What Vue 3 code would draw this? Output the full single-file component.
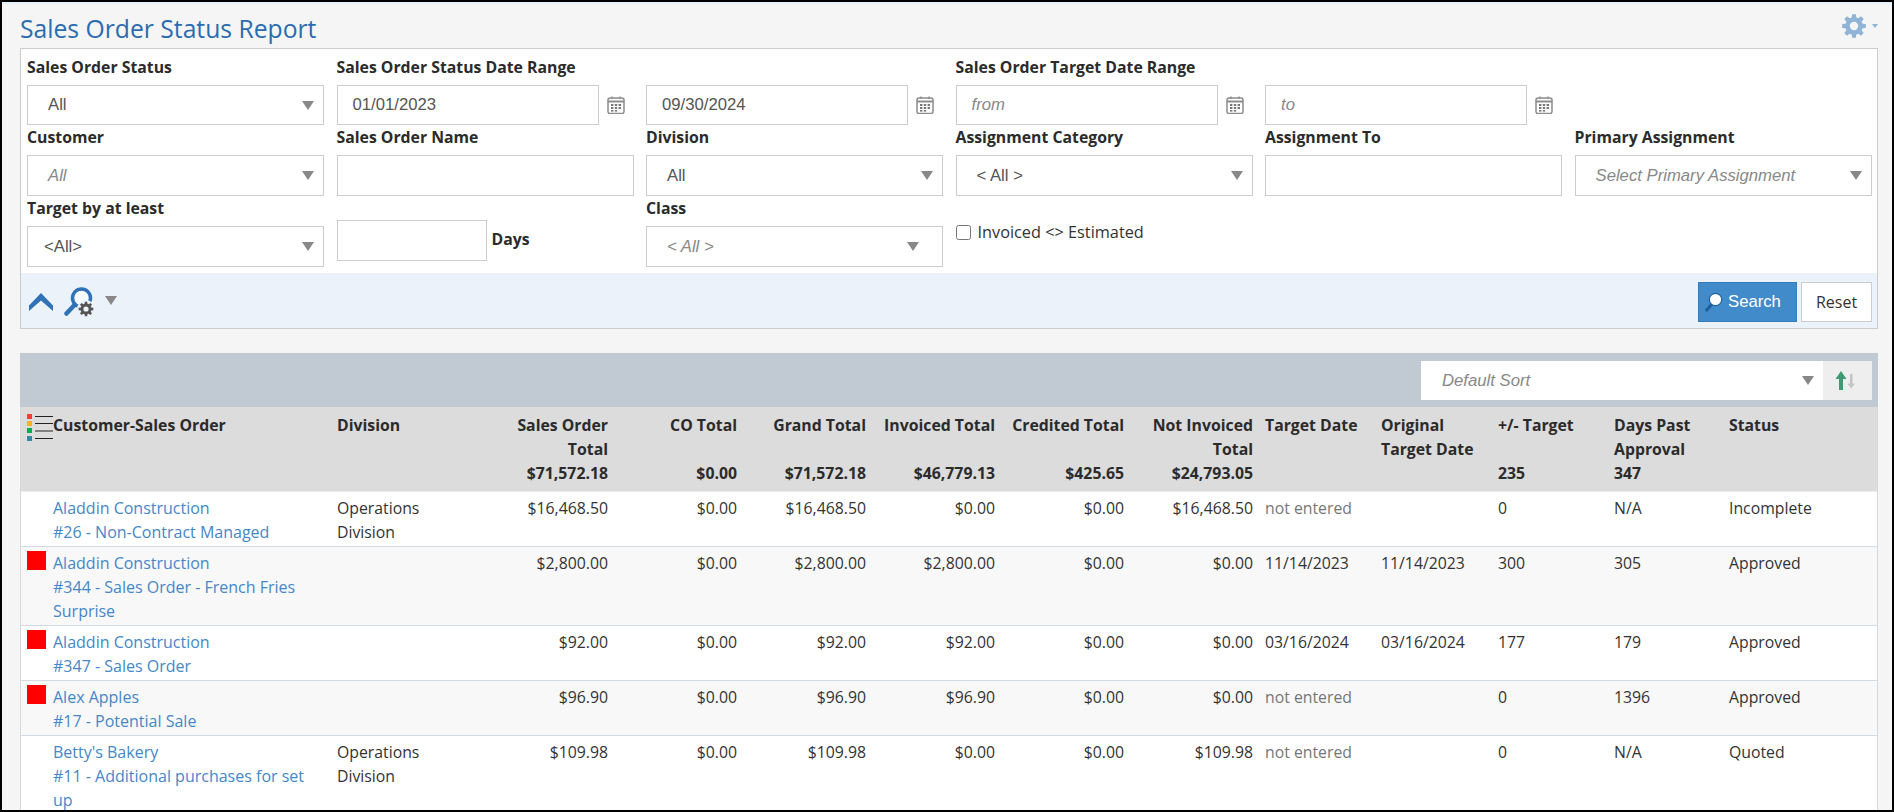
<template>
  <div class="page">
    <div class="title-bar">
      <h1 class="title">Sales Order Status Report</h1>
      <div class="settings">
        <svg width="24" height="24" viewBox="-12 -12 24 24">
          <path :d="gear" fill="#8fb4d6" fill-rule="evenodd" />
        </svg>
        <span class="settings-caret"></span>
      </div>
    </div>

    <section class="filters">
      <div class="filter-grid">
        <div class="field">
          <label class="field-label">Sales Order Status</label>
          <div class="select-box first-row"><span>All</span><i class="arrow"></i></div>
        </div>
        <div class="field span-2">
          <label class="field-label">Sales Order Status Date Range</label>
          <div class="date-range">
            <div v-for="d in statusDates" :key="d" class="date-group">
              <input class="text-input first-row date-input" :value="d" />
              <svg class="cal" width="18" height="18" viewBox="0 0 18 18">
                <use href="#cal-icon" />
              </svg>
            </div>
          </div>
        </div>
        <div class="field span-2">
          <label class="field-label">Sales Order Target Date Range</label>
          <div class="date-range">
            <div v-for="d in targetDates" :key="d" class="date-group">
              <input class="text-input first-row date-input" :placeholder="d" />
              <svg class="cal" width="18" height="18" viewBox="0 0 18 18">
                <use href="#cal-icon" />
              </svg>
            </div>
          </div>
        </div>
        <div class="field"></div>

        <div class="field">
          <label class="field-label">Customer</label>
          <div class="select-box placeholder"><span>All</span><i class="arrow"></i></div>
        </div>
        <div class="field">
          <label class="field-label">Sales Order Name</label>
          <input class="text-input" />
        </div>
        <div class="field">
          <label class="field-label">Division</label>
          <div class="select-box"><span>All</span><i class="arrow"></i></div>
        </div>
        <div class="field">
          <label class="field-label">Assignment Category</label>
          <div class="select-box"><span>&lt; All &gt;</span><i class="arrow"></i></div>
        </div>
        <div class="field">
          <label class="field-label">Assignment To</label>
          <input class="text-input" />
        </div>
        <div class="field">
          <label class="field-label">Primary Assignment</label>
          <div class="select-box placeholder"><span>Select Primary Assignment</span><i class="arrow"></i></div>
        </div>

        <div class="field">
          <label class="field-label">Target by at least</label>
          <div class="select-box tight"><span>&lt;All&gt;</span><i class="arrow"></i></div>
        </div>
        <div class="field days-field">
          <input class="text-input days-input" />
          <span class="days-label">Days</span>
        </div>
        <div class="field">
          <label class="field-label">Class</label>
          <div class="select-box placeholder class-select"><span>&lt; All &gt;</span><i class="arrow"></i></div>
        </div>
        <div class="field check-field">
          <input id="invoiced" type="checkbox" class="check" />
          <label for="invoiced">Invoiced &lt;&gt; Estimated</label>
        </div>
      </div>

      <div class="filter-actions">
        <svg class="collapse" width="24" height="18" viewBox="0 0 24 18">
          <path d="M12 0 24 12.5V18L12 7.5 0 18v-5.500z" fill="#2f72b5" />
        </svg>
        <svg class="saved-search" width="30" height="30" viewBox="0 0 30 30">
          <circle cx="17.500" cy="11" r="9" fill="#f6f9fd" stroke="#2f72b5" stroke-width="3.500" />
          <path d="M10.500 18 2.500 26.500" stroke="#2f72b5" stroke-width="4.500" stroke-linecap="round" />
          <circle cx="22" cy="22" r="9" fill="#ebf2fa" />
          <g transform="translate(22 22) scale(0.62)">
            <path :d="gear" fill="#555" fill-rule="evenodd" />
          </g>
        </svg>
        <i class="arrow saved-arrow"></i>
        <button class="btn btn-search" type="button">
          <svg width="18" height="20" viewBox="0 0 18 20">
            <path d="M7 12 1.800 18" stroke="#1f5f9c" stroke-width="3.200" stroke-linecap="round" />
            <circle cx="10.500" cy="7.500" r="6.200" fill="#fff" stroke="#1f5f9c" stroke-width="1.200" />
          </svg>
          Search
        </button>
        <button class="btn btn-reset" type="button">Reset</button>
      </div>
    </section>

    <section class="results">
      <div class="results-bar">
        <div class="sort-select">
          <span>Default Sort</span><i class="arrow"></i>
        </div>
        <button class="sort-dir" type="button">
          <svg width="22" height="20" viewBox="0 0 22 20">
            <path d="M6 0 11.500 8H8V19H4V8H.5z" fill="#3f9a74" />
            <path d="M15 3h2.500v9.500H20L16.250 17.500 12.500 12.500H15z" fill="#c4c4c4" />
          </svg>
        </button>
      </div>

      <table class="report">
        <colgroup>
          <col v-for="(w, i) in colWidths" :key="i" :style="{ width: w + 'px' }" />
        </colgroup>
        <thead>
          <tr>
            <th class="flag-cell">
              <svg width="26" height="28" viewBox="0 0 26 28">
                <rect x="0" y="0" width="5" height="5" fill="#ff3b30" />
                <rect x="0" y="7" width="5" height="5" fill="#ffb020" />
                <rect x="0" y="14" width="5" height="5" fill="#00b050" />
                <rect x="0" y="22" width="5" height="5" fill="#2e8ba6" />
                <path d="M8 2.500H26M8 9.500H26M8 17H26M8 24.500H26" stroke="#222" stroke-width="1" />
              </svg>
            </th>
            <th
              v-for="col in columns"
              :key="col.label"
              :class="{ num: col.num, 'cust-cell': col.cust }"
            >
              <div class="th-label">{{ col.label }}</div>
              <div class="th-total">{{ col.total }}</div>
            </th>
          </tr>
        </thead>
        <tbody>
          <tr v-for="row in rows" :key="row.order">
            <td class="flag-cell"><span v-if="row.late" class="flag"></span></td>
            <td class="cust-cell">
              <a href="#" class="link">{{ row.customer }}</a>
              <a href="#" class="link">{{ row.order }}</a>
            </td>
            <td>{{ row.division }}</td>
            <td class="num">{{ row.soTotal }}</td>
            <td class="num">$0.00</td>
            <td class="num">{{ row.grand }}</td>
            <td class="num">{{ row.invoiced }}</td>
            <td class="num">$0.00</td>
            <td class="num">{{ row.notInvoiced }}</td>
            <td :class="{ muted: !row.target }">{{ row.target || 'not entered' }}</td>
            <td>{{ row.target }}</td>
            <td>{{ row.delta }}</td>
            <td>{{ row.days }}</td>
            <td>{{ row.status }}</td>
          </tr>
        </tbody>
      </table>
    </section>

    <svg width="0" height="0" class="defs">
      <symbol id="cal-icon" viewBox="0 0 18 18">
        <rect x="1" y="2" width="16" height="15.500" rx="2" fill="#fff" stroke="#8c8c8c" stroke-width="1.500" />
        <path d="M1 5.500H17" stroke="#8c8c8c" stroke-width="2" />
        <path d="M5 0.500V3M13 0.500V3" stroke="#8c8c8c" stroke-width="1.500" />
        <g fill="#777">
          <rect x="4" y="8" width="2.400" height="2" /><rect x="7.800" y="8" width="2.400" height="2" /><rect x="11.600" y="8" width="2.400" height="2" />
          <rect x="4" y="11" width="2.400" height="2" /><rect x="7.800" y="11" width="2.400" height="2" /><rect x="11.600" y="11" width="2.400" height="2" />
          <rect x="4" y="14" width="2.400" height="1.600" /><rect x="7.800" y="14" width="2.400" height="1.600" />
        </g>
      </symbol>
    </svg>
  </div>
</template>

<script setup>
const statusDates = ['01/01/2023', '09/30/2024']
const targetDates = ['from', 'to']

// eight tooth cog, used in the title bar and on the saved search icon
function cogPath(teeth, outer, root, hole) {
  const pitch = (Math.PI * 2) / teeth
  const pts = []
  for (let i = 0; i < teeth; i++) {
    const a = i * pitch - Math.PI / 2
    const offsets = [[-0.34, root], [-0.2, outer], [0.2, outer], [0.34, root]]
    offsets.forEach(([o, r]) => {
      const t = a + o * pitch
      pts.push(`${(Math.cos(t) * r).toFixed(2)} ${(Math.sin(t) * r).toFixed(2)}`)
    })
  }
  const ring = `M${-hole} 0a${hole} ${hole} 0 1 0 ${hole * 2} 0a${hole} ${hole} 0 1 0 ${-hole * 2} 0z`
  return `M${pts.join('L')}z${ring}`
}
const gear = cogPath(8, 12, 8.8, 4.2)

const colWidths = [32, 278, 145, 138, 129, 129, 129, 129, 129, 116, 117, 116, 115, 154]

const columns = [
  { label: 'Customer-Sales Order', total: '', cust: true },
  { label: 'Division', total: '' },
  { label: 'Sales Order Total', total: '$71,572.18', num: true },
  { label: 'CO Total', total: '$0.00', num: true },
  { label: 'Grand Total', total: '$71,572.18', num: true },
  { label: 'Invoiced Total', total: '$46,779.13', num: true },
  { label: 'Credited Total', total: '$425.65', num: true },
  { label: 'Not Invoiced Total', total: '$24,793.05', num: true },
  { label: 'Target Date', total: '' },
  { label: 'Original Target Date', total: '' },
  { label: '+/- Target', total: '235' },
  { label: 'Days Past Approval', total: '347' },
  { label: 'Status', total: '' }
]

const rows = [
  {
    customer: 'Aladdin Construction',
    order: '#26 - Non-Contract Managed',
    late: false,
    division: 'Operations Division',
    soTotal: '$16,468.50',
    grand: '$16,468.50',
    invoiced: '$0.00',
    notInvoiced: '$16,468.50',
    target: '',
    delta: '0',
    days: 'N/A',
    status: 'Incomplete'
  },
  {
    customer: 'Aladdin Construction',
    order: '#344 - Sales Order - French Fries Surprise',
    late: true,
    division: '',
    soTotal: '$2,800.00',
    grand: '$2,800.00',
    invoiced: '$2,800.00',
    notInvoiced: '$0.00',
    target: '11/14/2023',
    delta: '300',
    days: '305',
    status: 'Approved'
  },
  {
    customer: 'Aladdin Construction',
    order: '#347 - Sales Order',
    late: true,
    division: '',
    soTotal: '$92.00',
    grand: '$92.00',
    invoiced: '$92.00',
    notInvoiced: '$0.00',
    target: '03/16/2024',
    delta: '177',
    days: '179',
    status: 'Approved'
  },
  {
    customer: 'Alex Apples',
    order: '#17 - Potential Sale',
    late: true,
    division: '',
    soTotal: '$96.90',
    grand: '$96.90',
    invoiced: '$96.90',
    notInvoiced: '$0.00',
    target: '',
    delta: '0',
    days: '1396',
    status: 'Approved'
  },
  {
    customer: "Betty's Bakery",
    order: '#11 - Additional purchases for set up',
    late: false,
    division: 'Operations Division',
    soTotal: '$109.98',
    grand: '$109.98',
    invoiced: '$0.00',
    notInvoiced: '$109.98',
    target: '',
    delta: '0',
    days: 'N/A',
    status: 'Quoted'
  }
]
</script>

<style>
html,
body {
  margin: 0;
  background: #f5f5f5;
}
</style>

<style scoped>
.page {
  box-sizing: border-box;
  width: 1894px;
  height: 812px;
  overflow: hidden;
  padding: 2px 14px 0 18px;
  border: 2px solid #000;
  background: #f5f5f5;
  color: #333;
  font-family: "Open Sans", "Noto Sans", sans-serif;
  font-size: 15.800px;
  line-height: 24px;
  box-shadow: inset 0 2px 0 #e6f3fa;
}

.defs {
  position: absolute;
}

.title-bar {
  display: flex;
  align-items: center;
  justify-content: space-between;
  height: 44px;
}

.title {
  margin: 0;
  padding-top: 6px;
  color: #2b6cb0;
  font-size: 24.700px;
  font-weight: 400;
  line-height: 30px;
}

.settings {
  display: flex;
  align-items: center;
  gap: 6px;
}

.settings-caret {
  width: 0;
  height: 0;
  border-left: 3.500px solid transparent;
  border-right: 3.500px solid transparent;
  border-top: 4px solid #8fb4d6;
}

.filters {
  border: 1px solid #ccc;
  background: #fff;
}

.filter-grid {
  display: grid;
  grid-template-columns: repeat(6, 297px);
  column-gap: 12.500px;
  padding: 6px;
}

.field {
  display: flex;
  flex-direction: column;
  min-width: 0;
}

.span-2 {
  grid-column: span 2;
}

.field-label {
  height: 24px;
  margin-bottom: 6px;
  font-weight: 700;
  color: #2b2b2b;
}

.text-input,
.select-box {
  box-sizing: border-box;
  height: 41px;
  border: 1px solid #ccc;
  background: #fff;
  font-family: "Liberation Sans", Arial, sans-serif;
  font-size: 16.700px;
  color: #555;
}

.first-row {
  height: 40px;
}

.text-input {
  width: 100%;
  padding: 0 15px;
  outline: none;
}

.text-input::placeholder {
  color: #888;
  font-style: italic;
}

.date-range {
  display: grid;
  grid-template-columns: 1fr 1fr;
  column-gap: 12.500px;
}

.date-group {
  display: flex;
  align-items: center;
}

.date-input {
  flex: none;
  width: 262px;
}

.cal {
  flex: none;
  margin-left: 8px;
}

.select-box {
  display: flex;
  align-items: center;
  justify-content: space-between;
  padding: 0 9px 0 20px;
}

.select-box.tight {
  padding-left: 16px;
}

.placeholder {
  color: #888;
  font-style: italic;
}

.class-select {
  padding-right: 23px;
}

.arrow {
  display: block;
  flex: none;
  width: 0;
  height: 0;
  border-left: 6px solid transparent;
  border-right: 6px solid transparent;
  border-top: 9px solid #888;
}

.days-field {
  flex-direction: row;
  align-items: center;
  gap: 5px;
  margin-top: 24px;
  margin-bottom: 6px;
}

.days-input {
  flex: none;
  width: 150px;
}

.days-label {
  margin-bottom: 4px;
  font-weight: 700;
  color: #2b2b2b;
}

.check-field {
  flex-direction: row;
  align-items: center;
  gap: 7px;
  height: 24px;
  margin-top: 24px;
  font-size: 16.300px;
}

.check {
  width: 15px;
  height: 15px;
  margin: 0;
}

.filter-actions {
  display: flex;
  align-items: center;
  padding: 9px 5px 6px 8px;
  background: #ebf2fa;
}

.saved-search {
  margin-left: 11px;
}

.saved-arrow {
  margin-left: 11px;
  margin-right: auto;
  margin-bottom: 3px;
}

.btn {
  box-sizing: border-box;
  height: 40px;
  cursor: pointer;
}

.btn-search {
  display: flex;
  align-items: center;
  gap: 5px;
  width: 99px;
  padding: 0 0 0 6px;
  border: 1px solid #357ebd;
  background: #428bca;
  color: #fff;
  font-family: "Liberation Sans", Arial, sans-serif;
  font-size: 16.700px;
}

.btn-reset {
  width: 71px;
  margin-left: 4px;
  padding: 0;
  border: 1px solid #ccc;
  background: #fff;
  color: #333;
  font-family: inherit;
  font-size: 16px;
}

.results {
  margin-top: 24px;
  border-left: 1px solid #d5d9de;
  border-right: 1px solid #d5d9de;
}

.results-bar {
  box-sizing: border-box;
  display: flex;
  justify-content: flex-end;
  height: 54px;
  margin: 0 -1px;
  padding: 8px 6px 7px 0;
  background: #c1c9d2;
}

.sort-select {
  box-sizing: border-box;
  display: flex;
  align-items: center;
  justify-content: space-between;
  width: 402px;
  padding: 0 9px 0 21px;
  background: #fff;
  color: #888;
  font-family: "Liberation Sans", Arial, sans-serif;
  font-size: 16.700px;
  font-style: italic;
}

.sort-dir {
  display: flex;
  align-items: center;
  justify-content: center;
  width: 49px;
  padding: 0 3px 0 0;
  border: 0;
  background: #eee;
}

.report {
  width: 1856px;
  table-layout: fixed;
  border-collapse: collapse;
  background: #fff;
}

.report th {
  padding: 6px;
  border-bottom: 1px solid #ececec;
  background: #dcdcdc;
  color: #2b2b2b;
  font-weight: 700;
  text-align: left;
  vertical-align: top;
}

.report td {
  padding: 4px 6px 2px;
  border-bottom: 1px solid #d3dae2;
  vertical-align: top;
}

.report tbody tr:nth-child(even) td {
  background: #f8f8f9;
}

.report .num {
  text-align: right;
}

.report .cust-cell {
  padding-left: 0;
}

.th-label {
  min-height: 48px;
}

.th-total {
  height: 24px;
}

.report th.flag-cell {
  padding: 7px 0 0 6px;
}

.report td.flag-cell {
  padding: 4px 0 0 6px;
}

.flag {
  display: block;
  width: 19px;
  height: 19px;
  background: #f00;
}

.link {
  display: block;
  color: #4587c7;
  font-size: 16px;
  text-decoration: none;
}

.muted {
  color: #777;
}
</style>
